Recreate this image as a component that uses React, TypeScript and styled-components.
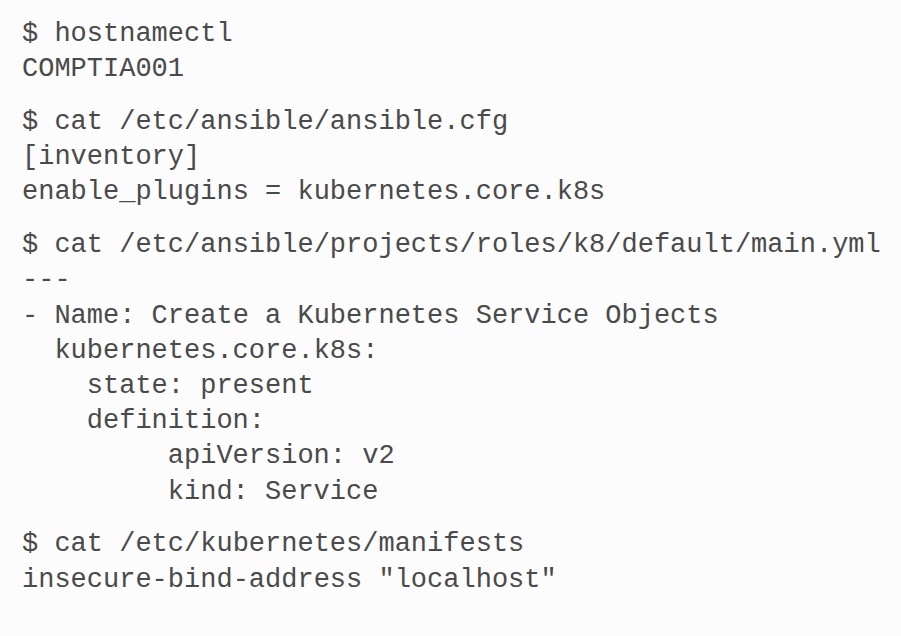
import React from "react";
import styled, { createGlobalStyle } from "styled-components";

const Global = createGlobalStyle`
  html, body { margin: 0; padding: 0; background: #fcfcfc; }
`;

const Terminal = styled.div`
  display: flex;
  flex-direction: column;
  gap: 17.6px;
  padding: 17px 0 0 22px;
  width: 901px;
  height: 636px;
  box-sizing: border-box;
  background: #fcfcfc;
  font-family: "Liberation Mono", "Courier New", monospace;
  font-size: 27px;
  line-height: 35.2px;
  color: #4a4a4a;
`;

const Block = styled.div`
  display: flex;
  flex-direction: column;
`;

const Line = styled.div<{ $indent?: number }>`
  white-space: pre;
  padding-left: ${(p) => (p.$indent ?? 0) * 0.6}em;
`;

const blocks: [number, string][][] = [
  [
    [0, "$ hostnamectl"],
    [0, "COMPTIA001"],
  ],
  [
    [0, "$ cat /etc/ansible/ansible.cfg"],
    [0, "[inventory]"],
    [0, "enable_plugins = kubernetes.core.k8s"],
  ],
  [
    [0, "$ cat /etc/ansible/projects/roles/k8/default/main.yml"],
    [0, "---"],
    [0, "- Name: Create a Kubernetes Service Objects"],
    [2, "kubernetes.core.k8s:"],
    [4, "state: present"],
    [4, "definition:"],
    [9, "apiVersion: v2"],
    [9, "kind: Service"],
  ],
  [
    [0, "$ cat /etc/kubernetes/manifests"],
    [0, 'insecure-bind-address "localhost"'],
  ],
];

export default function App() {
  return (
    <>
      <Global />
      <Terminal>
        {blocks.map((b, i) => (
          <Block key={i}>
            {b.map(([ind, t], j) => (
              <Line key={j} $indent={ind}>
                {t}
              </Line>
            ))}
          </Block>
        ))}
      </Terminal>
    </>
  );
}
